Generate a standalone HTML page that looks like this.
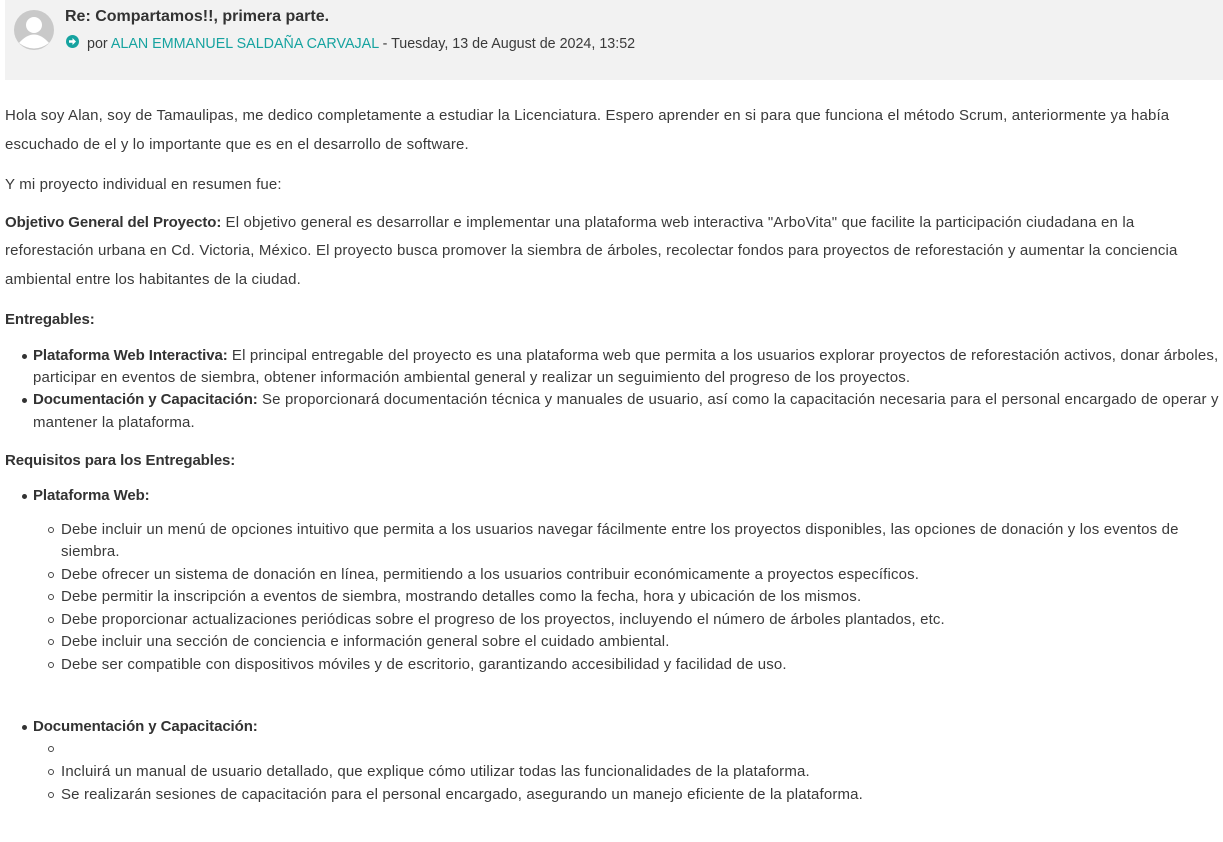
<!DOCTYPE html>
<html><head><meta charset="utf-8"><style>
body{margin:0;width:1223px;height:842px;background:#fff;font-family:"Liberation Sans",sans-serif;font-size:15px;letter-spacing:0.15px;color:#3a3a3a;position:relative;overflow:hidden}
.hd{position:absolute;left:5px;top:0;width:1218px;height:80px;background:#f2f2f2}
.l{position:absolute;white-space:nowrap;line-height:20px;margin-top:2px}
b{font-weight:bold;color:#333;letter-spacing:-0.1px}
.d::before{content:"";position:absolute;left:-11px;top:8px;width:5px;height:5px;border-radius:50%;background:#333}
.c::before{content:"";position:absolute;left:-13px;top:7px;width:4px;height:4px;border-radius:50%;border:1px solid #444}
a{color:#16a3a0;text-decoration:none}
</style></head><body>
<div class="hd"></div>
<svg style="position:absolute;left:14px;top:10px" width="40" height="40" viewBox="0 0 40 40"><circle cx="20" cy="20" r="20" fill="#c9c9c9"/><circle cx="20" cy="15" r="8" fill="#fff"/><path d="M5 33 Q20 16 35 33 Q20 44 5 33Z" fill="#fff"/></svg>
<div class="l" style="left:65px;top:5px;font-size:16px;font-weight:bold;color:#333;letter-spacing:0">Re: Compartamos!!, primera parte.</div>
<svg style="position:absolute;left:66px;top:35px" width="13" height="13" viewBox="0 0 13 13"><circle cx="6.5" cy="6.5" r="6.5" fill="#16a3a0"/><path d="M3 5.3h3.5V3l3.5 3.5-3.5 3.5V7.7H3z" fill="#fff"/></svg>
<div class="l" style="left:87px;top:32px;font-size:14.3px;letter-spacing:0">por <a>ALAN EMMANUEL SALDAÑA CARVAJAL</a> - Tuesday, 13 de August de 2024, 13:52</div>

<div class="l" style="left:5px;top:104px">Hola soy Alan, soy de Tamaulipas, me dedico completamente a estudiar la Licenciatura. Espero aprender en si para que funciona el método Scrum, anteriormente ya había</div>
<div class="l" style="left:5px;top:133px">escuchado de el y lo importante que es en el desarrollo de software.</div>
<div class="l" style="left:5px;top:173px">Y mi proyecto individual en resumen fue:</div>
<div class="l" style="left:5px;top:211px"><b>Objetivo General del Proyecto:</b> El objetivo general es desarrollar e implementar una plataforma web interactiva "ArboVita" que facilite la participación ciudadana en la</div>
<div class="l" style="left:5px;top:239px">reforestación urbana en Cd. Victoria, México. El proyecto busca promover la siembra de árboles, recolectar fondos para proyectos de reforestación y aumentar la conciencia</div>
<div class="l" style="left:5px;top:268px">ambiental entre los habitantes de la ciudad.</div>
<div class="l" style="left:5px;top:308px"><b>Entregables:</b></div>
<div class="l d" style="left:33px;top:344px"><b>Plataforma Web Interactiva:</b> El principal entregable del proyecto es una plataforma web que permita a los usuarios explorar proyectos de reforestación activos, donar árboles,</div>
<div class="l" style="left:33px;top:366px">participar en eventos de siembra, obtener información ambiental general y realizar un seguimiento del progreso de los proyectos.</div>
<div class="l d" style="left:33px;top:388px"><b>Documentación y Capacitación:</b> Se proporcionará documentación técnica y manuales de usuario, así como la capacitación necesaria para el personal encargado de operar y</div>
<div class="l" style="left:33px;top:411px">mantener la plataforma.</div>
<div class="l" style="left:5px;top:449px"><b>Requisitos para los Entregables:</b></div>
<div class="l d" style="left:33px;top:484px"><b>Plataforma Web:</b></div>
<div class="l c" style="left:61px;top:518px">Debe incluir un menú de opciones intuitivo que permita a los usuarios navegar fácilmente entre los proyectos disponibles, las opciones de donación y los eventos de</div>
<div class="l" style="left:61px;top:540px">siembra.</div>
<div class="l c" style="left:61px;top:563px">Debe ofrecer un sistema de donación en línea, permitiendo a los usuarios contribuir económicamente a proyectos específicos.</div>
<div class="l c" style="left:61px;top:585px">Debe permitir la inscripción a eventos de siembra, mostrando detalles como la fecha, hora y ubicación de los mismos.</div>
<div class="l c" style="left:61px;top:608px">Debe proporcionar actualizaciones periódicas sobre el progreso de los proyectos, incluyendo el número de árboles plantados, etc.</div>
<div class="l c" style="left:61px;top:630px">Debe incluir una sección de conciencia e información general sobre el cuidado ambiental.</div>
<div class="l c" style="left:61px;top:653px">Debe ser compatible con dispositivos móviles y de escritorio, garantizando accesibilidad y facilidad de uso.</div>
<div class="l d" style="left:33px;top:715px"><b>Documentación y Capacitación:</b></div>
<div class="l c" style="left:61px;top:737px">&nbsp;</div>
<div class="l c" style="left:61px;top:760px">Incluirá un manual de usuario detallado, que explique cómo utilizar todas las funcionalidades de la plataforma.</div>
<div class="l c" style="left:61px;top:783px">Se realizarán sesiones de capacitación para el personal encargado, asegurando un manejo eficiente de la plataforma.</div>
</body></html>
